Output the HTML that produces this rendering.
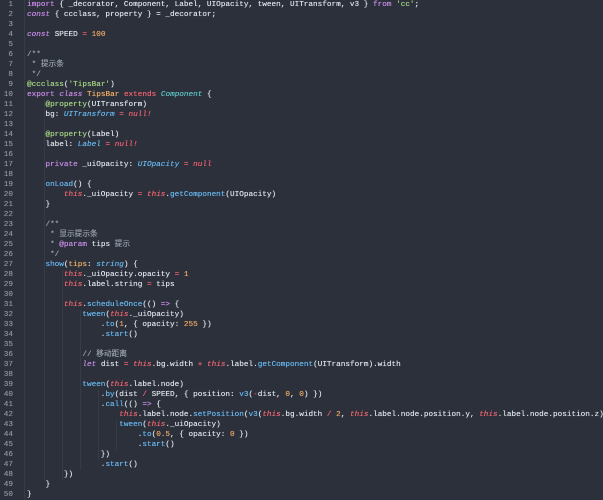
<!DOCTYPE html>
<html><head><meta charset="utf-8"><style>
html,body{margin:0;padding:0;background:#2b303b;width:603px;height:500px;overflow:hidden}
#c{position:relative;font-family:"Liberation Mono","Noto Sans CJK SC",monospace;font-size:7.7px;line-height:10px;color:#dde1e8;text-shadow:0 0 0.4px currentColor}
.l{height:10px;white-space:pre;position:relative}
.n{position:absolute;left:0;width:13px;text-align:right;color:#8a919c}
.t{position:absolute;left:27px}
.k{color:#c98be6}.i{color:#c98be6;font-style:italic}.th{color:#f0656f;font-style:italic}
.f{color:#68b6ee}.c{color:#5fc4c4;font-style:italic}.s{color:#a6d482}.num{color:#eba563}
.o{color:#f0606f}.nu{color:#f0606f;font-style:italic}.cm{color:#9aa2ad}.cl{color:#f0ad66}
.ty{color:#68b6ee;font-style:italic}
.g{position:absolute;width:1px;background:#363b46}
</style></head><body><div id="c">
<div class="g" style="left:24px;top:0;height:500px"></div>
<div class="g" style="left:44px;top:100px;height:380px"></div>
<div class="g" style="left:62px;top:270px;height:210px"></div>
<div class="g" style="left:80px;top:310px;height:160px"></div>
<div class="g" style="left:98px;top:390px;height:70px"></div>
<div class="g" style="left:116px;top:420px;height:30px"></div>
<div class="l"><span class="n">1</span><span class="t"><span class="k">import</span> { _decorator, Component, Label, UIOpacity, tween, UITransform, v3 } <span class="k">from</span> <span class="s">'cc'</span>;</span></div>
<div class="l"><span class="n">2</span><span class="t"><span class="i">const</span> { ccclass, property } = _decorator;</span></div>
<div class="l"><span class="n">3</span></div>
<div class="l"><span class="n">4</span><span class="t"><span class="i">const</span> SPEED <span class="o">=</span> <span class="num">100</span></span></div>
<div class="l"><span class="n">5</span></div>
<div class="l"><span class="n">6</span><span class="t cm">/**</span></div>
<div class="l"><span class="n">7</span><span class="t cm"> * 提示条</span></div>
<div class="l"><span class="n">8</span><span class="t cm"> */</span></div>
<div class="l"><span class="n">9</span><span class="t"><span class="s">@ccclass</span>(<span class="s">'TipsBar'</span>)</span></div>
<div class="l"><span class="n">10</span><span class="t"><span class="k">export</span> <span class="i">class</span> <span class="cl">TipsBar</span> <span class="o">extends</span> <span class="c">Component</span> {</span></div>
<div class="l"><span class="n">11</span><span class="t">    <span class="s">@property</span>(UITransform)</span></div>
<div class="l"><span class="n">12</span><span class="t">    bg: <span class="ty">UITransform</span> <span class="o">=</span> <span class="nu">null!</span></span></div>
<div class="l"><span class="n">13</span></div>
<div class="l"><span class="n">14</span><span class="t">    <span class="s">@property</span>(Label)</span></div>
<div class="l"><span class="n">15</span><span class="t">    label: <span class="ty">Label</span> <span class="o">=</span> <span class="nu">null!</span></span></div>
<div class="l"><span class="n">16</span></div>
<div class="l"><span class="n">17</span><span class="t">    <span class="k">private</span> _uiOpacity: <span class="ty">UIOpacity</span> <span class="o">=</span> <span class="nu">null</span></span></div>
<div class="l"><span class="n">18</span></div>
<div class="l"><span class="n">19</span><span class="t">    <span class="f">onLoad</span>() {</span></div>
<div class="l"><span class="n">20</span><span class="t">        <span class="th">this</span>._uiOpacity <span class="o">=</span> <span class="th">this</span>.<span class="f">getComponent</span>(UIOpacity)</span></div>
<div class="l"><span class="n">21</span><span class="t">    }</span></div>
<div class="l"><span class="n">22</span></div>
<div class="l"><span class="n">23</span><span class="t cm">    /**</span></div>
<div class="l"><span class="n">24</span><span class="t cm">     * 显示提示条</span></div>
<div class="l"><span class="n">25</span><span class="t cm">     * <span class="k">@param</span> <span style="color:#dde1e8">tips</span> 提示</span></div>
<div class="l"><span class="n">26</span><span class="t cm">     */</span></div>
<div class="l"><span class="n">27</span><span class="t">    <span class="f">show</span>(<span class="cl">tips</span>: <span class="ty">string</span>) {</span></div>
<div class="l"><span class="n">28</span><span class="t">        <span class="th">this</span>._uiOpacity.opacity <span class="o">=</span> <span class="num">1</span></span></div>
<div class="l"><span class="n">29</span><span class="t">        <span class="th">this</span>.label.string <span class="o">=</span> tips</span></div>
<div class="l"><span class="n">30</span></div>
<div class="l"><span class="n">31</span><span class="t">        <span class="th">this</span>.<span class="f">scheduleOnce</span>(() <span class="k">=&gt;</span> {</span></div>
<div class="l"><span class="n">32</span><span class="t">            <span class="f">tween</span>(<span class="th">this</span>._uiOpacity)</span></div>
<div class="l"><span class="n">33</span><span class="t">                .<span class="f">to</span>(<span class="num">1</span>, { opacity: <span class="num">255</span> })</span></div>
<div class="l"><span class="n">34</span><span class="t">                .<span class="f">start</span>()</span></div>
<div class="l"><span class="n">35</span></div>
<div class="l"><span class="n">36</span><span class="t cm">            // 移动距离</span></div>
<div class="l"><span class="n">37</span><span class="t">            <span class="i">let</span> dist <span class="o">=</span> <span class="th">this</span>.bg.width <span class="o">+</span> <span class="th">this</span>.label.<span class="f">getComponent</span>(UITransform).width</span></div>
<div class="l"><span class="n">38</span></div>
<div class="l"><span class="n">39</span><span class="t">            <span class="f">tween</span>(<span class="th">this</span>.label.node)</span></div>
<div class="l"><span class="n">40</span><span class="t">                .<span class="f">by</span>(dist <span class="o">/</span> SPEED, { position: <span class="f">v3</span>(<span class="o">-</span>dist, <span class="num">0</span>, <span class="num">0</span>) })</span></div>
<div class="l"><span class="n">41</span><span class="t">                .<span class="f">call</span>(() <span class="k">=&gt;</span> {</span></div>
<div class="l"><span class="n">42</span><span class="t">                    <span class="th">this</span>.label.node.<span class="f">setPosition</span>(<span class="f">v3</span>(<span class="th">this</span>.bg.width <span class="o">/</span> <span class="num">2</span>, <span class="th">this</span>.label.node.position.y, <span class="th">this</span>.label.node.position.z))</span></div>
<div class="l"><span class="n">43</span><span class="t">                    <span class="f">tween</span>(<span class="th">this</span>._uiOpacity)</span></div>
<div class="l"><span class="n">44</span><span class="t">                        .<span class="f">to</span>(<span class="num">0.5</span>, { opacity: <span class="num">0</span> })</span></div>
<div class="l"><span class="n">45</span><span class="t">                        .<span class="f">start</span>()</span></div>
<div class="l"><span class="n">46</span><span class="t">                })</span></div>
<div class="l"><span class="n">47</span><span class="t">                .<span class="f">start</span>()</span></div>
<div class="l"><span class="n">48</span><span class="t">        })</span></div>
<div class="l"><span class="n">49</span><span class="t">    }</span></div>
<div class="l"><span class="n">50</span><span class="t">}</span></div>
</div></body></html>
